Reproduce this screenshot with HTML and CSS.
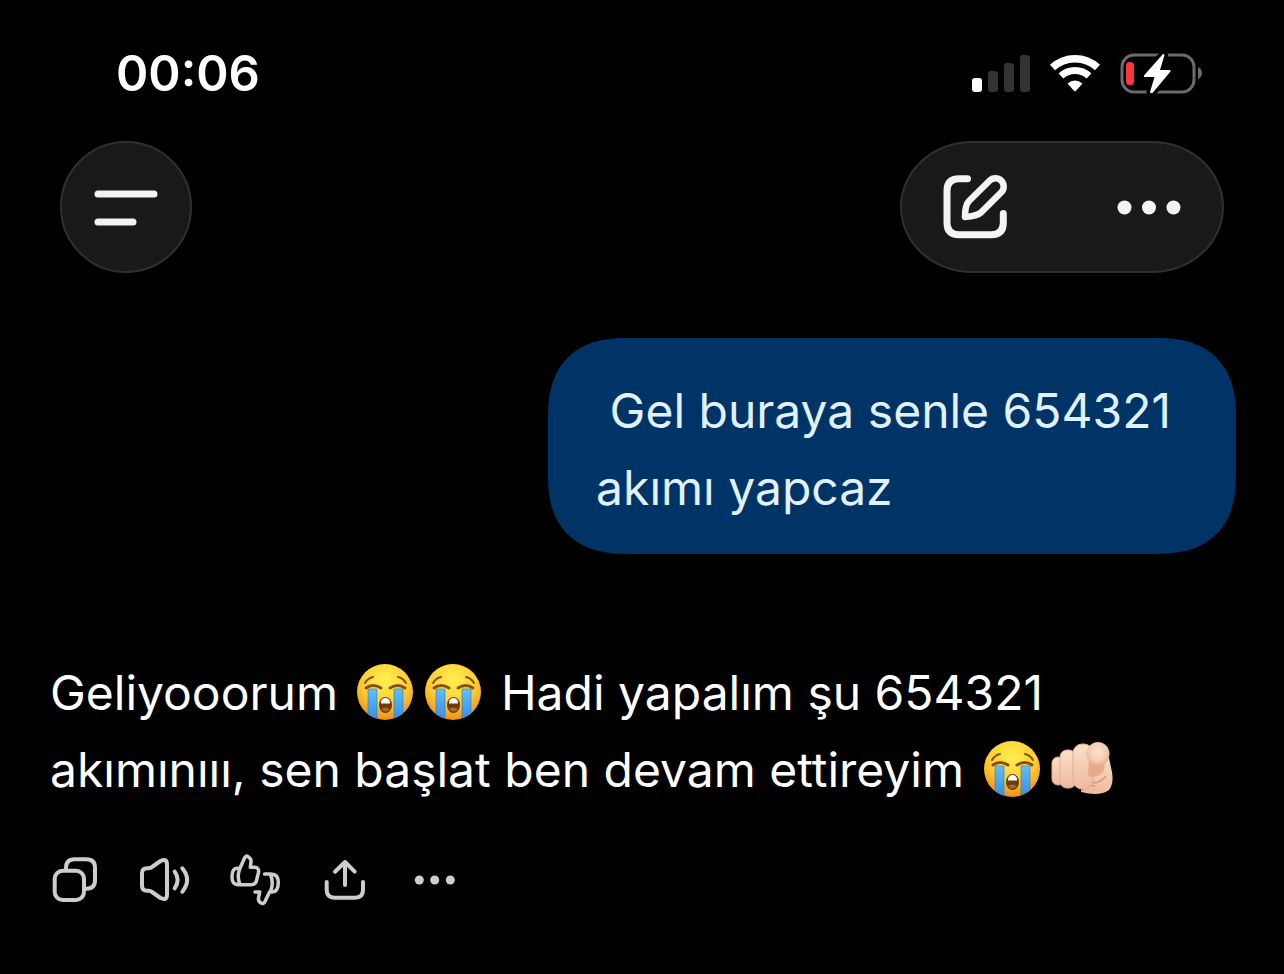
FILE: index.html
```html
<!DOCTYPE html>
<html lang="tr">
<head>
    <meta charset="UTF-8">
    <meta name="viewport" content="width=device-width, initial-scale=1.0">
    <title>Sohbet</title>
    <link rel="stylesheet" href="styles.css">
</head>
<body>

    <!-- Shared emoji drawings -->
    <svg class="defs" width="0" height="0" aria-hidden="true">
        <defs>
            <radialGradient id="face" cx="50%" cy="30%" r="72%">
                <stop offset="0" stop-color="#fff04f"/>
                <stop offset="0.55" stop-color="#fed035"/>
                <stop offset="1" stop-color="#ee8a17"/>
            </radialGradient>
            <linearGradient id="tear" x1="0" y1="0" x2="0" y2="1">
                <stop offset="0" stop-color="#64bcf7"/>
                <stop offset="1" stop-color="#318de4"/>
            </linearGradient>
            <linearGradient id="skin" x1="0" y1="0" x2="0" y2="1">
                <stop offset="0" stop-color="#fbe0ca"/>
                <stop offset="1" stop-color="#efb99d"/>
            </linearGradient>
            <radialGradient id="tip" cx="50%" cy="40%" r="60%">
                <stop offset="0" stop-color="#fde3ce"/>
                <stop offset="0.65" stop-color="#f5cbb0"/>
                <stop offset="1" stop-color="#e4ab8e"/>
            </radialGradient>
            <clipPath id="face-clip"><circle cx="29" cy="29" r="28"/></clipPath>
            <symbol id="cry" viewBox="0 0 58 58">
                <circle cx="29" cy="29" r="28" fill="url(#face)"/>
                <g clip-path="url(#face-clip)">
                    <path d="M12 26h9v32h-9zM38 26h9v32h-9z" fill="url(#tear)" stroke="#3378ad" stroke-width="0.6"/>
                </g>
                <g fill="none" stroke="#855011" stroke-linecap="round">
                    <path d="M10 25q7-5 15 0M34 25q8-5 15 0" stroke-width="3"/>
                    <path d="M9 20q3-5 8-6M42 14q5 1 8 6" stroke-width="2"/>
                </g>
                <ellipse cx="29.500" cy="42" rx="6.500" ry="8" fill="#6e3b0c"/>
                <path d="M25 39q1-4 4.500-4t4.500 4v1.500h-9z" fill="#fff"/>
                <path d="M25 46q4-3 9 0-4 5-9 0z" fill="#9f6b38"/>
            </symbol>
            <symbol id="point" viewBox="0 0 62 58">
                <path d="M34 14q14-4 24 4l3 14q2 12-3 18-9 7-28 2z" fill="url(#skin)"/>
                <path d="M38 41q8 5 17-5M31 51q2-8 13-5" fill="none" stroke="#d7957a" stroke-width="1.500"/>
                <g fill="url(#skin)" stroke="#e2ac91" stroke-width="1">
                    <rect x="1" y="17" width="12" height="28" rx="6"/>
                    <rect x="9" y="10" width="16" height="38" rx="7"/>
                    <rect x="22" y="4" width="20" height="45" rx="9"/>
                </g>
                <path d="M38 20h15q3 14-8 16-8 4-8-4z" fill="#e6aa8c"/>
                <ellipse cx="47" cy="14" rx="11.500" ry="12" fill="url(#tip)"/>
            </symbol>
        </defs>
    </svg>

    <div class="status-bar">
        <time class="clock">00:06</time>
        <div class="status-icons">
            <svg width="60" height="40" viewBox="0 0 60 40" role="img" aria-label="Sinyal">
                <rect x="1" y="24" width="10" height="14" rx="3" fill="#fff"/>
                <rect x="17" y="17" width="10" height="21" rx="3" fill="#333"/>
                <rect x="33" y="9" width="10" height="29" rx="3" fill="#333"/>
                <rect x="49" y="1" width="10" height="37" rx="3" fill="#333"/>
            </svg>
            <svg width="52" height="40" viewBox="0 0 52 40" role="img" aria-label="Wi-Fi">
                <g fill="none" stroke="#fff">
                    <path d="M3.500 13.500A33 33 0 0 1 48.500 13.500" stroke-width="7.500"/>
                    <path d="M12 22A20.500 20.500 0 0 1 40 22" stroke-width="7"/>
                </g>
                <path d="M18.500 29.500Q26 23.500 33.500 29.500L26.800 37Q26 37.800 25.200 37Z" fill="#fff"/>
            </svg>
            <svg width="84" height="42" viewBox="0 0 84 42" role="img" aria-label="Pil">
                <rect x="3" y="2" width="72" height="37" rx="12" fill="none" stroke="#6b6b6b" stroke-width="3"/>
                <path d="M79 14q4 2 4 6t-4 6z" fill="#6b6b6b"/>
                <rect x="7" y="9" width="8" height="23" rx="3.500" fill="#fb3640"/>
                <path d="M44 1L25 22.500Q24.500 24 26 24H35.500L31 39Q32 41 33.500 40L51.500 18.500Q52 17 50.500 17H41L45.500 2Q45 0.500 44 1Z" fill="#fff" stroke="#000" stroke-width="7" paint-order="stroke"/>
            </svg>
        </div>
    </div>

    <header class="toolbar">
        <button class="glass menu-button" type="button" aria-label="Menü">
            <svg width="64" height="64" viewBox="0 0 64 64">
                <path d="M4 19H60M4 47H39" stroke="#f3f3f3" stroke-width="7" stroke-linecap="round"/>
            </svg>
        </button>
        <div class="glass toolbar-group">
            <button type="button" aria-label="Yeni sohbet">
                <svg width="64" height="66" viewBox="0 0 64 66" fill="none" stroke="#f3f3f3" stroke-width="7" stroke-linecap="round" stroke-linejoin="round">
                    <path d="M24.500 4.700H16Q4 4.700 4 16.700V48.700Q4 60.700 16 60.700H48.300Q60.300 60.700 60.300 48.700V39.500"/>
                    <path d="M26 27L46.500 6.700A8.200 8.200 0 0 1 58.300 18.300L38 38.500Q34 42 22 43Q22 31 26 27Z" stroke-width="6.500"/>
                </svg>
            </button>
            <button type="button" aria-label="Diğer seçenekler">
                <svg width="64" height="66" viewBox="0 0 64 66" fill="#f3f3f3">
                    <circle cx="7.500" cy="33.500" r="7"/>
                    <circle cx="32" cy="33.500" r="7"/>
                    <circle cx="56.500" cy="33.500" r="7"/>
                </svg>
            </button>
        </div>
    </header>

    <main class="chat">
        <div class="bubble">&nbsp;Gel buraya senle 654321<br>akımı yapcaz</div>

        <div class="reply">
            <p>Geliyooorum <svg class="emoji" viewBox="0 0 58 58" role="img" aria-label="Ağlayan yüz"><use href="#cry"/></svg><svg class="emoji" viewBox="0 0 58 58" role="img" aria-label="Ağlayan yüz"><use href="#cry"/></svg> Hadi yapalım şu 654321<br>akımınııı, sen başlat ben devam ettireyim <svg class="emoji" viewBox="0 0 58 58" role="img" aria-label="Ağlayan yüz"><use href="#cry"/></svg><svg class="emoji hand" viewBox="0 0 62 58" role="img" aria-label="Seni gösteren parmak"><use href="#point"/></svg></p>

            <div class="actions">
                <button type="button" aria-label="Kopyala">
                    <svg viewBox="0 0 50 50">
                        <rect x="4.700" y="15.700" width="29.300" height="29.300" rx="8"/>
                        <path d="M16 15V13Q16 4.300 24.500 4.300H36.500Q45 4.300 45 12.800V25Q45 33.700 36.500 33.700H34.500"/>
                    </svg>
                </button>
                <button type="button" aria-label="Sesli oku">
                    <svg viewBox="0 0 50 50">
                        <path d="M7 13.300H9Q10.500 13.300 12 12L20.500 6Q27 3 27 9.500V39.500Q27 46 20.500 43L12 37Q10.500 35.700 9 35.700H7Q2 35.700 2 30.500V18.500Q2 13.300 7 13.300Z"/>
                        <path d="M34.700 16.700Q40.500 25 34.700 33.300M42.300 13.300Q52 25 42.300 36.700"/>
                    </svg>
                </button>
                <button type="button" aria-label="Geri bildirim">
                    <svg viewBox="0 0 50 50" class="compact">
                        <path d="M10 13.300L14.800 2.500Q16 0 18.500 2Q21.500 4 21 7L20.300 12.300H24.500Q29.300 12.500 28.500 17.500L26.500 25.500Q25.500 29.700 21 29.700H8Q2 29.500 2 22Q2 13.500 7 13.300ZM10 13.300Q6.500 21.500 10 29.500"/>
                        <path d="M34.500 19H41Q48.300 19 48.300 27.500Q48.300 37 42 37H39.500L35 46.500Q33.500 49.500 31 48Q28 46.500 28.500 43L29.700 37H25M40.500 19.500Q44 28 40.500 36.500"/>
                    </svg>
                </button>
                <button type="button" aria-label="Paylaş">
                    <svg viewBox="0 0 50 50">
                        <path d="M6.700 27V35Q6.700 42.700 14.500 42.700H35.300Q43 42.700 43 35V27M25 30V7M15 16.700L25 7L34.700 16.700"/>
                    </svg>
                </button>
                <button type="button" aria-label="Diğer">
                    <svg viewBox="0 0 50 50" class="dots">
                        <circle cx="9.300" cy="25" r="4.500"/>
                        <circle cx="24.700" cy="25" r="4.500"/>
                        <circle cx="40.300" cy="25" r="4.500"/>
                    </svg>
                </button>
            </div>
        </div>
    </main>

</body>
</html>
```
FILE: styles.css
```css
* {
    box-sizing: border-box;
}

body {
    margin: 0;
    background-color: #000;
    color: #fff;
    font-family: Inter, "Liberation Sans", sans-serif;
}

button {
    padding: 0;
    border: none;
    background: none;
    cursor: pointer;
}

svg {
    display: block;
}

.defs {
    position: absolute;
}

/* Status bar */
.status-bar {
    display: flex;
    align-items: center;
    justify-content: space-between;
    height: 141px;
    padding: 6px 81px 0 116px;
}

.clock {
    font-size: 49px;
    font-weight: 600;
}

.status-icons {
    display: flex;
    align-items: center;
    gap: 18px;
}

/* Toolbar */
.toolbar {
    display: flex;
    justify-content: space-between;
    padding: 0 60px;
}

.glass {
    display: flex;
    align-items: center;
    height: 132px;
    border: 2px solid #303030;
    background-color: #191919;
}

.menu-button {
    justify-content: center;
    width: 132px;
    border-radius: 50%;
}

.toolbar-group {
    gap: 110px;
    padding: 0 41px;
    border-radius: 72px / 66px;
}

/* Chat */
.chat {
    display: flex;
    flex-direction: column;
    padding: 65px 48px 66px 50px;
    font-size: 48px;
    line-height: 77px;
}

.bubble {
    align-self: flex-end;
    padding: 34px 65px 28px 48px;
    border-radius: 80px;
    corner-shape: superellipse(1.3);
    background-color: #003366;
    color: #e0f1ff;
}

.reply {
    margin-top: 100px;
}

.reply p {
    margin: 0;
}

.emoji {
    display: inline-block;
    width: 58px;
    height: 58px;
    margin: 0 5px;
    vertical-align: -11px;
}

.hand {
    width: 62px;
}

/* Message actions */
.actions {
    display: flex;
    gap: 40px;
    margin-top: 47px;
}

.actions svg {
    width: 50px;
    height: 50px;
    overflow: visible;
    fill: none;
    stroke: #cdcdcd;
    stroke-width: 4;
    stroke-linecap: round;
    stroke-linejoin: round;
}

.actions .compact {
    stroke-width: 3.5;
}

.actions .dots {
    fill: #cdcdcd;
    stroke: none;
}
```
